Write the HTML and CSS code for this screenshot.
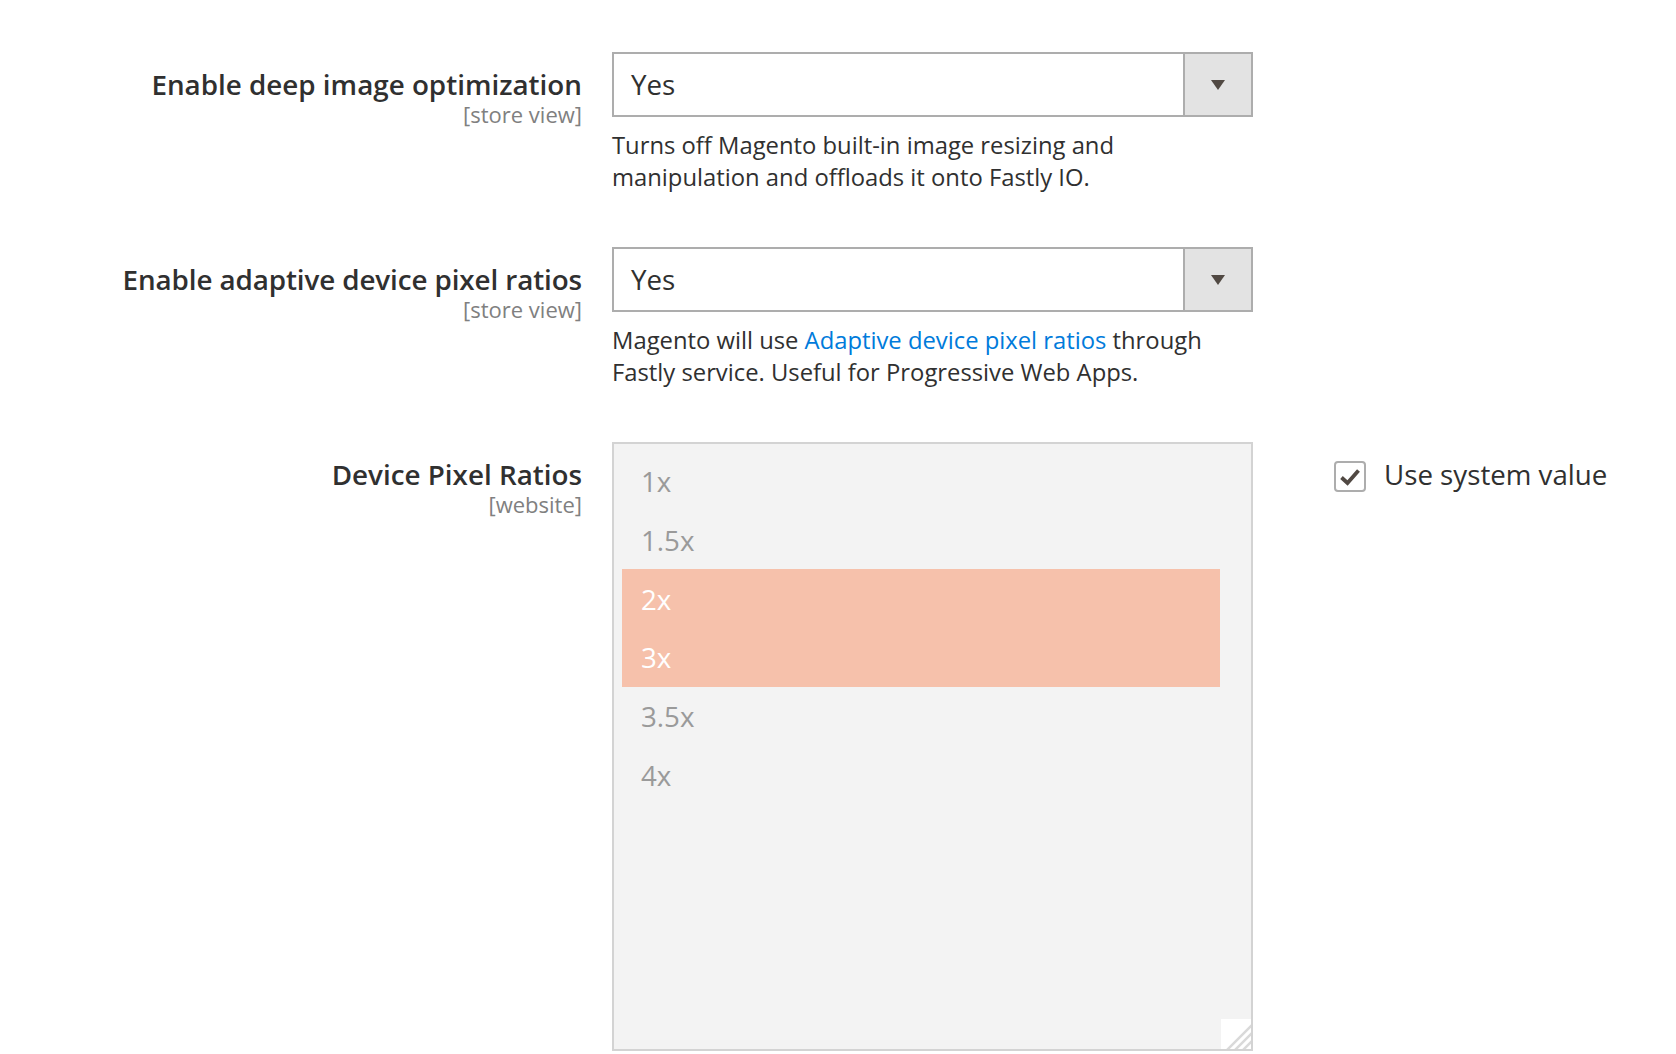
FILE: index.html
```html
<!DOCTYPE html>
<html lang="en">
<head>
<meta charset="utf-8">
<title>Fastly image optimization</title>
<link rel="stylesheet" href="styles.css">
</head>
<body>
<div class="form">
  <div class="row">
    <div class="label">
      <span class="label-text">Enable deep image optimization</span>
      <span class="scope">[store view]</span>
    </div>
    <div class="control">
      <div class="select">
        <span class="select-value">Yes</span>
        <span class="select-btn"><span class="arrow"></span></span>
      </div>
      <p class="note">Turns off Magento built-in image resizing and manipulation and offloads it onto Fastly IO.</p>
    </div>
    <div class="extra"></div>
  </div>

  <div class="row">
    <div class="label">
      <span class="label-text label-text-wide">Enable adaptive device pixel ratios</span>
      <span class="scope">[store view]</span>
    </div>
    <div class="control">
      <div class="select">
        <span class="select-value">Yes</span>
        <span class="select-btn"><span class="arrow"></span></span>
      </div>
      <p class="note">Magento will use <a class="link" href="#">Adaptive device pixel ratios</a> through Fastly service. Useful for Progressive Web Apps.</p>
    </div>
    <div class="extra"></div>
  </div>

  <div class="row">
    <div class="label">
      <span class="label-text">Device Pixel Ratios</span>
      <span class="scope">[website]</span>
    </div>
    <div class="control">
      <div class="multiselect">
        <ul class="options">
          <li class="option">1x</li>
          <li class="option">1.5x</li>
          <li class="option selected">2x</li>
          <li class="option selected">3x</li>
          <li class="option">3.5x</li>
          <li class="option">4x</li>
        </ul>
        <svg class="resize" width="30" height="30" viewBox="0 0 30 30" aria-hidden="true">
          <rect x="0" y="0" width="30" height="30" fill="#ffffff"/>
          <line x1="6" y1="31" x2="31" y2="6" stroke="#d9d9d9" stroke-width="2.5"/>
          <line x1="14" y1="31" x2="31" y2="14" stroke="#d9d9d9" stroke-width="2.5"/>
          <line x1="22" y1="31" x2="31" y2="22" stroke="#d9d9d9" stroke-width="2.5"/>
        </svg>
      </div>
    </div>
    <div class="extra">
      <label class="use-default">
        <span class="checkbox">
          <svg width="22" height="18" viewBox="0 0 22 18" aria-hidden="true">
            <path d="M2.5 9.5 L8.5 15 L19.5 2.5" fill="none" stroke="#514943" stroke-width="3.8" stroke-linejoin="miter" stroke-linecap="butt"/>
          </svg>
        </span>
        <span class="use-default-text">Use system value</span>
      </label>
    </div>
  </div>
</div>
</body>
</html>
```
FILE: styles.css
```css
* {
  box-sizing: border-box;
}

html, body {
  margin: 0;
  padding: 0;
  background: #ffffff;
}

body {
  font-family: "Open Sans", "Noto Sans", "Liberation Sans", sans-serif;
  color: #303030;
  width: 1676px;
  height: 1054px;
  overflow: hidden;
}

.form {
  display: flex;
  flex-direction: column;
  gap: 54px;
  padding-top: 52px;
}

.row {
  display: grid;
  grid-template-columns: 582px 641px 1fr;
  column-gap: 30px;
  align-items: start;
}

.label {
  display: flex;
  flex-direction: column;
  align-items: flex-end;
  text-align: right;
  padding-top: 14px;
}

.label-text {
  font-size: 27.8px;
  font-weight: 600;
  line-height: 36px;
  color: #303030;
}

.label-text-wide {
  letter-spacing: -0.1px;
}

.scope {
  font-size: 22px;
  line-height: 24px;
  color: #808080;
}

.control {
  display: flex;
  flex-direction: column;
}

.select {
  display: flex;
  height: 65px;
  border: 2px solid #adadad;
  background: #ffffff;
}

.select-value {
  flex: 1;
  display: flex;
  align-items: center;
  padding-left: 17px;
  padding-bottom: 2px;
  font-size: 27.7px;
  color: #303030;
}

.select-btn {
  width: 68px;
  border-left: 2px solid #adadad;
  background: #e3e3e3;
  display: flex;
  align-items: center;
  justify-content: center;
}

.arrow {
  width: 0;
  height: 0;
  border-left: 7.5px solid transparent;
  border-right: 7.5px solid transparent;
  border-top: 10px solid #514943;
  margin-top: 1px;
}

.note {
  margin: 12px 0 0;
  font-size: 23.8px;
  line-height: 32px;
  color: #303030;
}

.link {
  color: #007bdb;
  text-decoration: none;
}

.multiselect {
  position: relative;
  height: 609px;
  border: 2px solid #d3d3d3;
  background: #f3f3f3;
}

.options {
  list-style: none;
  margin: 0;
  padding: 8px 31px 8px 8px;
}

.option {
  height: 58.67px;
  display: flex;
  align-items: center;
  padding-left: 19px;
  font-size: 27.7px;
  color: #9a9a9a;
}

.option.selected {
  background: #f6c1ab;
  color: #ffffff;
}

.resize {
  position: absolute;
  right: 0;
  bottom: 0;
  display: block;
}

.extra {
  padding-left: 51px;
}

.use-default {
  display: flex;
  align-items: flex-start;
  gap: 18px;
  margin-top: 19px;
  cursor: pointer;
}

.checkbox {
  flex: none;
  width: 32px;
  height: 31px;
  border: 2px solid #adadad;
  border-radius: 4px;
  background: #ffffff;
  display: flex;
  align-items: center;
  justify-content: center;
}

.checkbox svg {
  display: block;
}

.use-default-text {
  font-size: 27.7px;
  line-height: 31px;
  margin-top: -2px;
  color: #303030;
}
```
